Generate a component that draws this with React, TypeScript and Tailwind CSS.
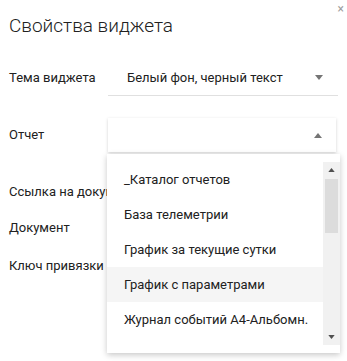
import React from "react";

const items = [
  "_Каталог отчетов",
  "База телеметрии",
  "График за текущие сутки",
  "График с параметрами",
  "Журнал событий А4-Альбомн.",
];

function Caret({ up, className }: { up?: boolean; className?: string }) {
  return (
    <svg width="8" height="5" viewBox="0 0 8 5" className={className}>
      {up ? <path d="M0 5 L4 0 L8 5 Z" fill="currentColor" /> : <path d="M0 0 L8 0 L4 5 Z" fill="currentColor" />}
    </svg>
  );
}

export default function App() {
  return (
    <div
      className="relative w-[347px] h-[361px] bg-white overflow-hidden text-[#212121]"
      style={{ fontFamily: "Roboto, 'Noto Sans', sans-serif" }}
    >
      {/* close */}
      <div className="absolute top-[3px] right-[3px] text-[#9e9e9e] text-[12px] leading-[12px]">×</div>

      <div className="pt-[15px] pl-[9px] text-[19px] leading-[22px] font-light">Свойства виджета</div>

      {/* theme */}
      <div className="mt-[23px] flex items-center h-[36px]">
        <div className="w-[108px] pl-[9px] text-[13px]">Тема виджета</div>
        <div className="w-[230px] h-[36px] border-b border-[#e0e0e0] flex items-center pl-[19px] pr-[15px] text-[13px]">
          <span className="flex-1">Белый фон, черный текст</span>
          <Caret className="text-[#757575]" />
        </div>
      </div>

      {/* report */}
      <div className="mt-[22px] flex items-center h-[34px]">
        <div className="w-[108px] pl-[9px] text-[13px]">Отчет</div>
        <div className="w-[228px] h-[34px] bg-white shadow-[0_1px_3px_rgba(0,0,0,0.18)] flex items-center justify-end pr-[14px]">
          <Caret up className="text-[#757575]" />
        </div>
      </div>

      <div className="mt-[30px] h-[20px] flex items-center pl-[9px] text-[13px] whitespace-nowrap">Ссылка на документ</div>
      <div className="mt-[16px] h-[20px] flex items-center pl-[9px] text-[13px]">Документ</div>
      <div className="mt-[18px] h-[20px] flex items-center pl-[9px] text-[13px]">Ключ привязки</div>

      {/* dropdown */}
      <div className="absolute top-[154px] left-[107px] w-[233px] h-[199px] bg-white shadow-[0_2px_6px_rgba(0,0,0,0.22)] py-[8px] flex">
        <div className="flex-1 overflow-hidden">
          {items.map((it, i) => (
            <div
              key={it}
              className={`h-[35px] flex items-center pl-[17px] text-[13px] whitespace-nowrap ${i === 3 ? "bg-[#f5f5f5]" : ""}`}
            >
              {it}
            </div>
          ))}
        </div>
        <div className="w-[17px] bg-[#f1f1f1] flex flex-col items-center">
          <div className="h-[16px] flex items-center justify-center">
            <Caret up className="text-[#505050] w-[7px] h-[4px]" />
          </div>
          <div className="mt-[1px] w-[13px] h-[54px] bg-[#dcdcdc]" />
          <div className="flex-1" />
          <div className="h-[16px] flex items-center justify-center">
            <Caret className="text-[#505050] w-[7px] h-[4px]" />
          </div>
        </div>
      </div>
    </div>
  );
}
